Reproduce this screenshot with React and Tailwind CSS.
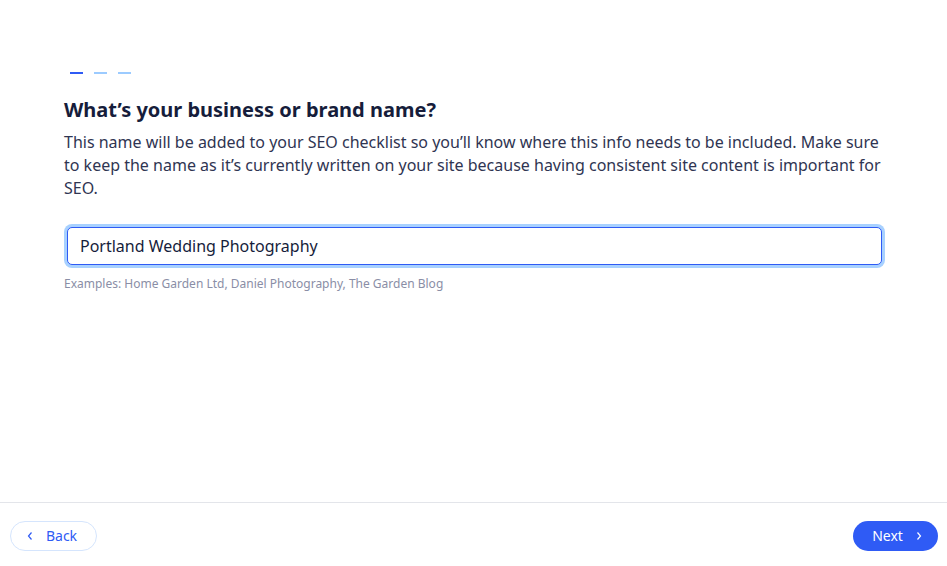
import React, { useState } from 'react';

const App = () => {
  const [name, setName] = useState('Portland Wedding Photography');

  return (
    <div
      className="w-[947px] h-[566px] bg-white flex flex-col text-[#161d3b]"
      style={{ fontFamily: '"Noto Sans", "Open Sans", sans-serif' }}
    >
      {/* Step content */}
      <div className="flex-1 px-16 pt-[72px]">
        {/* Progress dashes */}
        <div className="flex gap-[11px] pl-[6px]">
          <div className="w-[13px] h-[2px] bg-[#2f5bf5]" />
          <div className="w-[13px] h-[2px] bg-[#9ccbff]" />
          <div className="w-[13px] h-[2px] bg-[#9ccbff]" />
        </div>

        <h1 className="mt-[22px] text-[20px] leading-[28px] font-bold">
          What’s your business or brand name?
        </h1>
        <p className="mt-[7px] text-[16px] leading-[23px] text-[#2f3552]">
          This name will be added to your SEO checklist so you’ll know where this info needs to be included. Make sure
          to keep the name as it’s currently written on your site because having consistent site content is important for
          SEO.
        </p>

        <div className="mt-[24px] w-[821px] rounded-[8px] p-[3px] bg-[#a8d1ff]">
          <input
            type="text"
            value={name}
            onChange={(e) => setName(e.target.value)}
            className="w-full h-[38px] rounded-[5px] border border-[#2f5bf5] bg-white px-[12px] text-[16px] text-[#161d3b] outline-none"
          />
        </div>
        <p className="mt-[8px] text-[12px] leading-[16px] text-[#8a8ea6]">
          Examples: Home Garden Ltd, Daniel Photography, The Garden Blog
        </p>
      </div>

      {/* Footer */}
      <div className="h-[64px] border-t border-[#e3e5ea] flex items-center justify-between pl-[10px] pr-[9px] pt-[2px]">
        <button className="h-[30px] w-[87px] rounded-full border border-[#d5e5fd] flex items-center justify-center gap-[12px] text-[14px] text-[#2f5bf5] pr-[4px]">
          <svg width="8" height="10" viewBox="0 0 8 10" fill="none">
            <path d="M5.5 1.5 L2.5 5 L5.5 8.5" stroke="currentColor" strokeWidth="1.2" />
          </svg>
          <span>Back</span>
        </button>
        <button className="h-[30px] w-[85px] rounded-full bg-[#2f5bf5] flex items-center justify-center gap-[12px] text-[14px] text-white pl-[4px]">
          <span>Next</span>
          <svg width="8" height="10" viewBox="0 0 8 10" fill="none">
            <path d="M2.5 1.5 L5.5 5 L2.5 8.5" stroke="currentColor" strokeWidth="1.2" />
          </svg>
        </button>
      </div>
    </div>
  );
};

export default App;
